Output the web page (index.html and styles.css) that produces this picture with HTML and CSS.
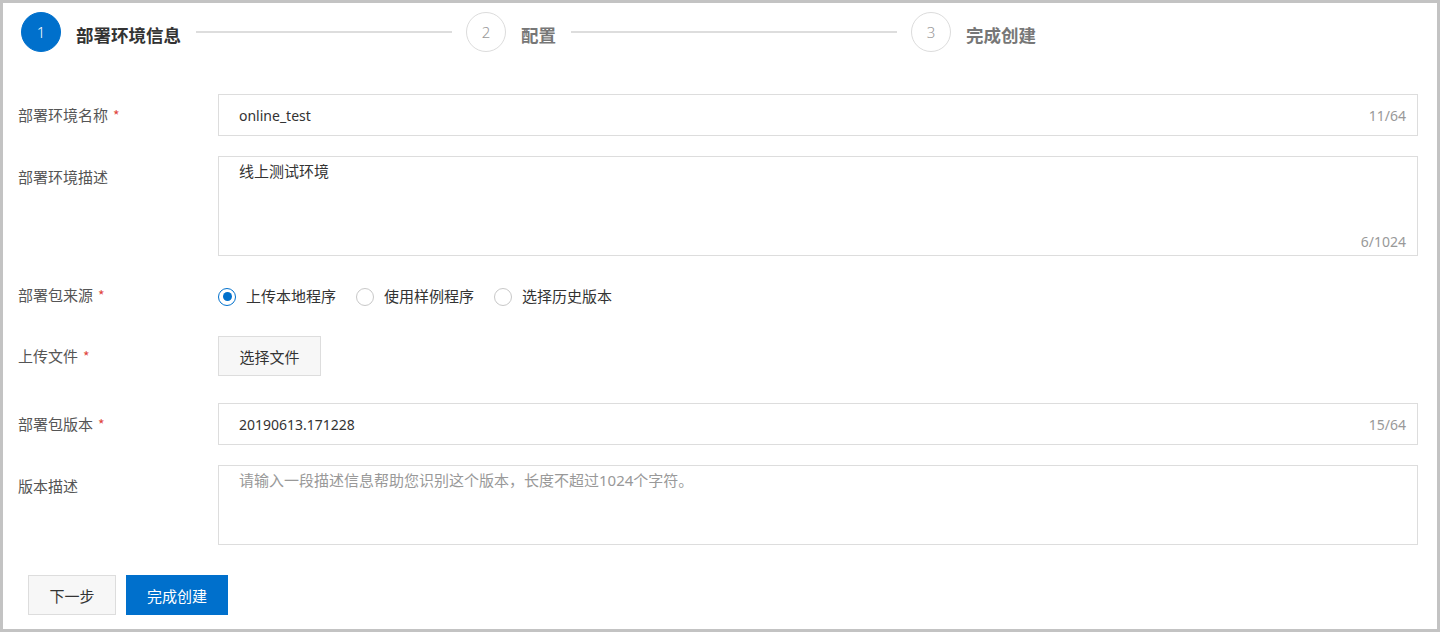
FILE: index.html
```html
<!DOCTYPE html>
<html lang="zh-CN">
<head>
<meta charset="utf-8">
<title>创建部署环境</title>
<link rel="stylesheet" href="styles.css">
</head>
<body>
<div class="page">
  <div class="steps">
    <div class="step active">
      <span class="step-num">1</span>
      <span class="step-title">部署环境信息</span>
      <span class="step-line"></span>
    </div>
    <div class="step">
      <span class="step-num">2</span>
      <span class="step-title">配置</span>
      <span class="step-line"></span>
    </div>
    <div class="step step-last">
      <span class="step-num">3</span>
      <span class="step-title">完成创建</span>
    </div>
  </div>

  <div class="form">
    <div class="row">
      <div class="label">部署环境名称<span class="req">*</span></div>
      <div class="field input">
        <span class="value">online_test</span>
        <span class="count">11/64</span>
      </div>
    </div>
    <div class="row row-desc">
      <div class="label">部署环境描述</div>
      <div class="field textarea tall">
        <span class="value cjk">线上测试环境</span>
        <span class="count">6/1024</span>
      </div>
    </div>
    <div class="row row-radio">
      <div class="label">部署包来源<span class="req">*</span></div>
      <div class="radios">
        <span class="radio checked"><span class="dot"></span><span class="radio-text">上传本地程序</span></span>
        <span class="radio"><span class="dot"></span><span class="radio-text">使用样例程序</span></span>
        <span class="radio"><span class="dot"></span><span class="radio-text">选择历史版本</span></span>
      </div>
    </div>
    <div class="row row-upload">
      <div class="label">上传文件<span class="req">*</span></div>
      <button class="btn btn-default btn-upload" type="button">选择文件</button>
    </div>
    <div class="row">
      <div class="label">部署包版本<span class="req">*</span></div>
      <div class="field input">
        <span class="value">20190613.171228</span>
        <span class="count">15/64</span>
      </div>
    </div>
    <div class="row row-last">
      <div class="label">版本描述</div>
      <div class="field textarea short">
        <span class="placeholder">请输入一段描述信息帮助您识别这个版本，长度不超过1024个字符。</span>
      </div>
    </div>
  </div>

  <div class="actions">
    <button class="btn btn-default btn-next" type="button">下一步</button>
    <button class="btn btn-primary btn-finish" type="button">完成创建</button>
  </div>
</div>
</body>
</html>
```

FILE: styles.css
```css
html, body {
  margin: 0;
  padding: 0;
  background: #fff;
}

body {
  font-family: "Noto Sans", "Noto Sans CJK SC", sans-serif;
  font-size: 14px;
  color: #333;
}

.page {
  box-sizing: border-box;
  width: 1440px;
  height: 632px;
  border: 3px solid #c3c3c3;
  background: #fff;
  overflow: hidden;
}

/* Steps */
.steps {
  display: flex;
  padding: 9px 0 0 18px;
}

.step {
  display: flex;
  align-items: center;
  width: 445px;
  flex: none;
}

.step-last {
  width: auto;
}

.step-num {
  box-sizing: border-box;
  width: 40px;
  height: 40px;
  border-radius: 50%;
  border: 1px solid #dcdcdc;
  display: flex;
  align-items: center;
  justify-content: center;
  font-size: 15px;
  font-weight: 300;
  color: #999;
  margin-right: 15px;
  flex: none;
}

.active .step-num {
  background: #0070cc;
  border-color: #0070cc;
  color: #fff;
}

.step-title {
  font-family: "Noto Sans CJK SC", sans-serif;
  font-size: 17.5px;
  font-weight: 700;
  color: #777;
  margin-right: 15px;
  line-height: 24px;
  margin-top: 6px;
}

.active .step-title {
  color: #333;
}

.step-line {
  flex: 1;
  height: 2px;
  background: #dddddd;
  margin-right: 14px;
}

/* Form */
.form {
  margin-top: 42px;
  padding-left: 15px;
}

.row {
  display: flex;
  align-items: flex-start;
  margin-bottom: 20px;
}

.label {
  width: 200px;
  flex: none;
  line-height: 42px;
  color: #555;
  font-family: "Noto Sans CJK SC", sans-serif;
  font-size: 15px;
}

.req {
  color: #e0443c;
  margin-left: 5px;
  font-size: 14px;
}

.field {
  box-sizing: border-box;
  width: 1200px;
  border: 1px solid #dddddd;
  background: #fff;
}

.input {
  height: 42px;
  display: flex;
  align-items: center;
  padding: 0 11px 0 20px;
}

.textarea {
  display: flex;
  flex-direction: column;
  padding: 4px 11px 3px 20px;
  line-height: 20px;
}

.tall {
  height: 100px;
}

.short {
  height: 80px;
}

.value {
  color: #333;
}

.cjk {
  font-size: 15px;
}

.count {
  margin-left: auto;
  color: #999;
}

.textarea .count {
  margin-top: auto;
  align-self: flex-end;
}

.placeholder {
  color: #999;
  font-size: 15px;
}

.row-desc {
  margin-bottom: 19px;
}

.row-radio {
  height: 40px;
  align-items: center;
  margin-bottom: 21px;
}

.row-radio .label {
  line-height: 40px;
}

.radios {
  display: flex;
  align-items: center;
  gap: 20px;
}

.radio {
  display: flex;
  align-items: center;
  color: #333;
  font-size: 15px;
  font-family: "Noto Sans CJK SC", sans-serif;
}

.dot {
  box-sizing: border-box;
  width: 18px;
  height: 18px;
  border-radius: 50%;
  border: 1px solid #c8c8c8;
  margin-right: 10px;
  display: flex;
  align-items: center;
  justify-content: center;
  margin-top: 3px;
}

.radio.checked .dot {
  border: 1.5px solid #0070cc;
}

.radio.checked .dot::after {
  content: "";
  width: 9px;
  height: 9px;
  border-radius: 50%;
  background: #0070cc;
}

.row-upload {
  margin-bottom: 27px;
}

.row-upload .label {
  line-height: 40px;
}

/* Buttons */
.btn {
  box-sizing: border-box;
  height: 40px;
  font-family: "Noto Sans CJK SC", sans-serif;
  font-size: 15px;
  padding: 0;
  border: 1px solid #dddddd;
  cursor: pointer;
}

.btn-default {
  background: #f7f7f7;
  color: #333;
}

.btn-primary {
  background: #0070cc;
  border-color: #0070cc;
  color: #fff;
}

.btn-upload {
  width: 103px;
}

.actions {
  display: flex;
  gap: 10px;
  margin-top: 30px;
  padding-left: 25px;
}

.btn-next {
  width: 88px;
}

.btn-finish {
  width: 102px;
}
```
